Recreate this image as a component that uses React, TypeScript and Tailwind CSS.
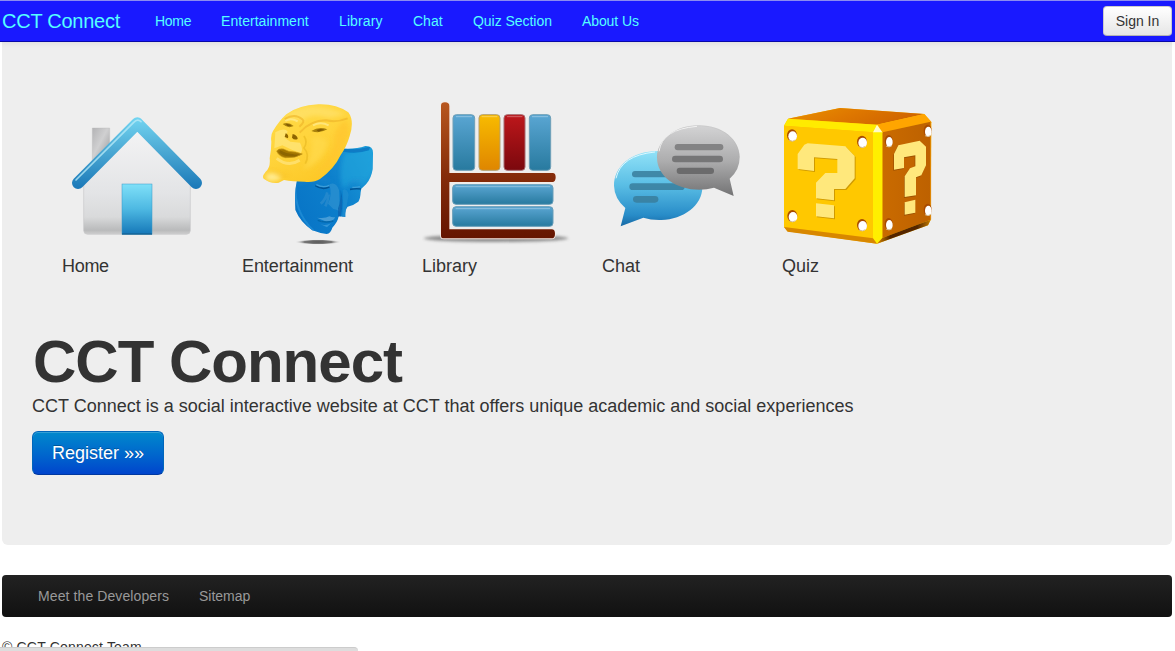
import React from "react";

const BOLTS: [number, number][] = [[52, 122], [262, 141], [53, 364], [262, 391], [342, 139], [459, 108], [342, 388], [459, 345]];

function HomeIcon() {
  return (
    <svg width="150" height="150" viewBox="6 0 450 450" className="block">
      <defs>
        <linearGradient id="roof" x1="0" y1="65" x2="0" y2="282" gradientUnits="userSpaceOnUse">
          <stop offset="0" stopColor="#73d6f2" /><stop offset="0.45" stopColor="#4eabd5" /><stop offset="1" stopColor="#1a78b8" />
        </linearGradient>
        <linearGradient id="wall" x1="0" y1="110" x2="0" y2="418" gradientUnits="userSpaceOnUse">
          <stop offset="0" stopColor="#f3f3f4" /><stop offset="0.6" stopColor="#e3e4e6" /><stop offset="0.83" stopColor="#d9dadb" /><stop offset="0.96" stopColor="#b9babb" /><stop offset="1" stopColor="#cfcfcf" />
        </linearGradient>
        <linearGradient id="door" x1="0" y1="0" x2="0" y2="1">
          <stop offset="0" stopColor="#7fe0f8" /><stop offset="0.5" stopColor="#4db8e2" /><stop offset="1" stopColor="#1577b8" />
        </linearGradient>
        <linearGradient id="chimney" x1="0" y1="0" x2="1" y2="1">
          <stop offset="0" stopColor="#b3b3b5" /><stop offset="0.45" stopColor="#d0d0d1" /><stop offset="1" stopColor="#969698" />
        </linearGradient>
      </defs>
      <path d="M97 99H149V150L97 198Z" fill="url(#chimney)" stroke="#b5b5b5" />
      <path d="M231 98L391 258V406Q391 418 379 418H83Q71 418 71 406V258Z" fill="url(#wall)" stroke="#c8c8ca" strokeWidth="2" />
      <rect x="186" y="267" width="90" height="151" fill="url(#door)" stroke="#3b98c5" strokeWidth="1.5" />
      <path d="M186 417H276" stroke="#155a86" strokeWidth="3" />
      <path d="M54 264L232 85L408 264" fill="none" stroke="url(#roof)" strokeWidth="36" strokeLinecap="round" strokeLinejoin="round" />
      <path d="M48 255L221 82Q232 70 243 80" fill="none" stroke="#b6eaf7" strokeWidth="5" opacity="0.8" strokeLinecap="round" />
    </svg>
  );
}

function MasksIcon() {
  return (
    <svg width="150" height="150" viewBox="6 0 450 450" className="block">
      <defs>
        <linearGradient id="gold" x1="0.2" y1="0" x2="0.7" y2="1">
          <stop offset="0" stopColor="#ffdb46" /><stop offset="0.5" stopColor="#ffd43c" /><stop offset="1" stopColor="#fcc724" />
        </linearGradient>
        <linearGradient id="blueMask" x1="0" y1="0.7" x2="1" y2="0.1">
          <stop offset="0" stopColor="#0874c6" /><stop offset="0.5" stopColor="#0d80cc" /><stop offset="1" stopColor="#1f9fda" />
        </linearGradient>
        <radialGradient id="maskShadow">
          <stop offset="0" stopColor="#555" /><stop offset="0.6" stopColor="#777" /><stop offset="1" stopColor="#ededed" stopOpacity="0" />
        </radialGradient>
        <clipPath id="goldClip"><path d="M99 108Q118 77 139 58Q174 31 235 28Q288 26 325 52Q344 78 329 123Q320 155 302 180Q283 221 240 252Q222 263 194 260Q157 260 132 255L116 263Q92 267 71 251Q65 244 77 230Q92 218 89 190Q94 163 94 140Q91 120 99 108Z" /></clipPath>
        <clipPath id="blueClip"><path d="M300 160Q345 164 376 153Q400 152 399 176L398 222Q394 250 378 268L364 281L362 292Q361 312 355 320Q341 331 323 335Q315 343 316 366L296 364Q294 380 277 398Q272 416 260 417Q236 414 217 406Q181 382 166 345Q163 290 171 255Z" /></clipPath>
        <filter id="soft" x="-40%" y="-40%" width="180%" height="180%"><feGaussianBlur stdDeviation="6" /></filter>
        <filter id="softer" x="-40%" y="-60%" width="180%" height="220%"><feGaussianBlur stdDeviation="2.2" /></filter>
      </defs>
      <ellipse cx="234" cy="441" rx="70" ry="8" fill="url(#maskShadow)" />
      <g clipPath="url(#blueClip)">
        <path d="M150 140H410V430H150Z" fill="url(#blueMask)" />
        <path d="M312 175Q355 170 399 157V225Q386 260 368 272Q356 254 330 264L312 282Q292 250 312 175Z" fill="#24a6dd" opacity="0.6" filter="url(#soft)" />
        <path d="M306 162Q350 166 390 155L387 166Q350 178 310 170Z" fill="#0875c1" opacity="0.8" filter="url(#softer)" />
        <path d="M268 268Q288 258 297 285L300 350Q290 342 280 342L264 326Q278 300 268 268Z" fill="#3294d2" opacity="0.65" filter="url(#softer)" />
        <path d="M302 285Q312 318 302 366H294V340Q303 320 302 285Z" fill="#075fac" opacity="0.65" filter="url(#softer)" />
        <path d="M308 285Q322 278 326 300Q320 325 317 366H306Q312 330 308 285Z" fill="#238fd1" opacity="0.65" filter="url(#softer)" />
        <path d="M262 292Q256 315 242 326M266 298Q264 318 256 334" fill="none" stroke="#338fcf" strokeWidth="8" opacity="0.6" filter="url(#softer)" />
        <path d="M174 270Q205 240 270 257M325 267Q350 248 374 262" fill="none" stroke="#218bd0" strokeWidth="8" opacity="0.5" filter="url(#soft)" />
        <path d="M226 272Q247 286 268 276M330 283Q347 280 363 282" fill="none" stroke="#065597" strokeWidth="5" filter="url(#softer)" />
        <path d="M229 269Q250 280 268 271M337 277Q350 278 360 275" fill="none" stroke="#3d9dd7" strokeWidth="4" filter="url(#softer)" />
        <path d="M231 368Q256 371 268 364Q278 368 286 366Q278 382 261 381Z" fill="#55a6da" opacity="0.8" filter="url(#softer)" />
        <path d="M233 376Q254 385 280 378" fill="none" stroke="#0767ad" strokeWidth="4" filter="url(#softer)" />
        <path d="M240 387Q256 394 273 385L261 397Z" fill="#48a3df" opacity="0.65" filter="url(#softer)" />
        <path d="M166 270Q162 350 220 407" fill="none" stroke="#1a88d3" strokeWidth="6" filter="url(#softer)" />
      </g>
      <g clipPath="url(#goldClip)">
        <path d="M60 20H345V270H60Z" fill="url(#gold)" />
        <path d="M150 49Q224 16 317 57Q289 66 263 69Q213 52 184 79Q150 63 130 78Z" fill="#ffe477" opacity="0.6" filter="url(#soft)" />
        <path d="M318 75Q335 108 317 134Q287 212 217 247Q275 191 283 145Q276 101 318 75Z" fill="#ffc42d" opacity="0.65" filter="url(#soft)" />
        <path d="M215 128Q265 119 262 151Q246 202 189 225Q219 178 215 128Z" fill="#ffda4d" opacity="0.7" filter="url(#soft)" />
        <path d="M106 112Q132 96 143 109L136 130L151 140L180 143Q190 162 183 174Q154 166 127 151L103 160Z" fill="#ffec8c" opacity="0.6" filter="url(#softer)" />
        <path d="M77 239L101 232L125 245Q112 263 80 256Z" fill="#fff0a0" opacity="0.85" filter="url(#soft)" />
        <path d="M134 72Q165 54 187 73Q196 80 178 95M179 113Q211 76 258 76Q291 83 323 70" fill="none" stroke="#efb52a" strokeWidth="6" opacity="0.65" filter="url(#softer)" />
        <path d="M136 78Q153 67 173 79M219 91Q242 78 266 91" fill="none" stroke="#ffef9b" strokeWidth="6" opacity="0.65" filter="url(#softer)" />
        <g filter="url(#softer)">
          <path d="M128 87Q145 79 161 93Q144 102 128 87ZM214 108Q237 93 262 103Q239 117 214 108Z" fill="#a9820c" />
          <path d="M134 126L137 115Q147 119 144 130ZM156 128L158 117Q173 121 173 132Q163 137 156 128Z" fill="#8e6500" />
          <path d="M192 123Q204 141 192 159Q210 179 196 206" fill="none" stroke="#eaba24" strokeWidth="5" opacity="0.7" />
        </g>
        <path d="M137 88Q147 84 154 92L143 94ZM229 105Q241 100 253 104L236 110Z" fill="#755000" opacity="0.75" />
        <path d="M110 168Q115 160 130 162L146 169Q166 170 187 177Q164 191 136 188Q116 184 110 168Z" fill="#a37600" stroke="#c59819" strokeWidth="2" />
        <path d="M120 166Q137 176 158 177Q171 180 180 177L168 184Q136 187 118 173Z" fill="#815c04" opacity="0.65" filter="url(#softer)" />
        <path d="M110 190Q145 218 179 196" fill="none" stroke="#ffe681" strokeWidth="9" opacity="0.7" filter="url(#softer)" />
        <path d="M96 225Q120 246 145 240" fill="none" stroke="#f6bd29" strokeWidth="6" opacity="0.6" filter="url(#soft)" />
      </g>
    </svg>
  );
}

function LibraryIcon() {
  return (
    <svg width="150" height="150" viewBox="21 0 450 450" className="block">
      <defs>
        <linearGradient id="wood" x1="0" y1="22" x2="0" y2="430" gradientUnits="userSpaceOnUse">
          <stop offset="0" stopColor="#b8571e" /><stop offset="0.55" stopColor="#842b0a" /><stop offset="1" stopColor="#651500" />
        </linearGradient>
        <linearGradient id="bookBlue" x1="0" y1="0" x2="0" y2="1"><stop offset="0" stopColor="#5aa6d3" /><stop offset="1" stopColor="#287a9f" /></linearGradient>
        <linearGradient id="bookGold" x1="0" y1="0" x2="0" y2="1"><stop offset="0" stopColor="#f8bb00" /><stop offset="1" stopColor="#df8600" /></linearGradient>
        <linearGradient id="bookRed" x1="0" y1="0" x2="0" y2="1"><stop offset="0" stopColor="#bd171b" /><stop offset="1" stopColor="#7b080d" /></linearGradient>
        <filter id="shelfBlur" x="-20%" y="-100%" width="140%" height="300%"><feGaussianBlur stdDeviation="5" /></filter>
      </defs>
      <ellipse cx="243" cy="430" rx="217" ry="11" fill="#777" opacity="0.8" filter="url(#shelfBlur)" />
      <path d="M78 32Q78 22 90 22Q103 22 103 33V234H413Q422 234 422 247Q422 261 412 261H103V403H410Q420 403 420 416Q420 430 410 430H86Q78 430 78 422Z" fill="url(#wood)" stroke="#f5ebe6" strokeWidth="5" paintOrder="stroke" />
      <g strokeWidth="3">
        <rect x="114" y="59" width="65" height="167" rx="10" fill="url(#bookBlue)" stroke="#6f9fb7" />
        <rect x="192" y="59" width="63" height="167" rx="10" fill="url(#bookGold)" stroke="#b3a170" />
        <rect x="267" y="59" width="63" height="167" rx="10" fill="url(#bookRed)" stroke="#a66b70" />
        <rect x="343" y="59" width="64" height="167" rx="10" fill="url(#bookBlue)" stroke="#6f9fb7" />
        <rect x="113" y="269" width="301" height="59" rx="10" fill="url(#bookBlue)" stroke="#669db9" />
        <rect x="113" y="335" width="301" height="59" rx="10" fill="url(#bookBlue)" stroke="#669db9" />
      </g>
      <path d="M124 65H170M201 65H246M277 65H321M352 65H398M123 275H404M123 341H404" stroke="#fff" strokeWidth="2" opacity="0.5" strokeLinecap="round" />
    </svg>
  );
}

function ChatIcon() {
  return (
    <svg width="150" height="150" viewBox="6 0 450 450" className="block">
      <defs>
        <linearGradient id="blueBubble" x1="0" y1="168" x2="0" y2="394" gradientUnits="userSpaceOnUse">
          <stop offset="0" stopColor="#91e2f8" /><stop offset="0.45" stopColor="#5abee5" /><stop offset="0.85" stopColor="#288cc8" /><stop offset="1" stopColor="#1768a4" />
        </linearGradient>
        <linearGradient id="grayBubble" x1="0" y1="92" x2="0" y2="303" gradientUnits="userSpaceOnUse">
          <stop offset="0" stopColor="#d3d3d4" /><stop offset="0.5" stopColor="#adadae" /><stop offset="1" stopColor="#737374" />
        </linearGradient>
      </defs>
      <path d="M175 168C92 168 42 216 42 272Q43 310 76 339L62 394L130 368Q154 376 184 375C250 374 307 331 307 277C307 215 253 168 175 168Z" fill="url(#blueBubble)" />
      <path d="M48 250Q63 181 165 171" fill="none" stroke="#e7fbff" strokeWidth="3" opacity="0.9" />
      <g fill="#397e9d" opacity="0.85">
        <rect x="96" y="228" width="110" height="19" rx="9" /><rect x="88" y="265" width="166" height="20" rx="10" /><rect x="99" y="303" width="76" height="20" rx="10" />
      </g>
      <path d="M296 91C223 91 171 136 171 188C171 243 228 284 298 284Q320 284 342 278L401 303L389 251Q419 226 419 187C419 134 368 91 296 91Z" fill="url(#grayBubble)" />
      <path d="M177 169Q187 102 291 94" fill="none" stroke="#f6f6f6" strokeWidth="3" />
      <path d="M296 92C223 92 172 136 172 188M296 92C368 92 418 134 418 187" fill="none" stroke="#aaa" strokeWidth="1" opacity="0.6" />
      <g fill="#767677"><rect x="224" y="147" width="146" height="19" rx="9" fill="#838384" /><rect x="216" y="182" width="153" height="20" rx="10" /><rect x="230" y="218" width="112" height="19" rx="9" fill="#6b6b6c" /></g>
    </svg>
  );
}

function QuizIcon() {
  return (
    <svg width="150" height="150" viewBox="21 0 450 450" className="block">
      <defs>
        <linearGradient id="cubeTop" x1="0" y1="0" x2="1" y2="0.3"><stop offset="0" stopColor="#e99200" /><stop offset="0.5" stopColor="#df7800" /><stop offset="1" stopColor="#cf6400" /></linearGradient>
        <linearGradient id="cubeBottom" x1="0" y1="0" x2="1" y2="0"><stop offset="0" stopColor="#d88900" /><stop offset="0.25" stopColor="#542400" /><stop offset="0.75" stopColor="#542600" /><stop offset="1" stopColor="#c37a00" /></linearGradient>
        <linearGradient id="cubeSide" x1="0" y1="0" x2="1" y2="0"><stop offset="0" stopColor="#ca6b00" /><stop offset="1" stopColor="#bd6100" /></linearGradient>
      </defs>
      <path d="M39 71L195 39L448 57L469 82L467 375L459 391L306 446L37 409L27 396V92Z" fill="#ffbd00" />
      <path d="M39 71L195 39L448 57L304 89Z" fill="url(#cubeTop)" />
      <path d="M39 71L306 89L294 112L27 92Z" fill="#ffeb00" />
      <path d="M306 89L448 57L469 80L322 112Z" fill="#ffa500" />
      <path d="M27 92L295 112V429L27 397Z" fill="#ffc800" />
      <path d="M322 112L467 80V374L322 429Z" fill="url(#cubeSide)" />
      <path d="M467 80V374" stroke="#e88a00" strokeWidth="2" />
      <path d="M294 112L306 89L322 112V430L306 446L294 432Z" fill="#ffef00" />
      <path d="M294 112L306 89L322 112Z" fill="#fffac9" />
      <path d="M27 396L294 430L306 446L38 410Z" fill="#d88700" />
      <path d="M306 446L322 429L467 374L459 391Z" fill="url(#cubeBottom)" />
      <path d="M68 177L88 149L98 145L211 154L239 183V250L211 282H177V316L123 310V263L151 234H187V192L117 187V228L68 222ZM123 325L177 331V370L123 364Z" fill="#d09a00" transform="translate(3 3)" />
      <path d="M68 177L88 149L98 145L211 154L239 183V250L211 282H177V316L123 310V263L151 234H187V192L117 187V228L68 222ZM123 325L177 331V370L123 364Z" fill="#ffe87c" />
      <path d="M357 177L370 151L434 137L453 155V211L439 241L423 247V301L389 306V244L405 220L421 214V181L387 187V219L357 224ZM389 322L421 314V353L389 359Z" fill="#9a5000" transform="translate(-2 3)" />
      <path d="M357 177L370 151L434 137L453 155V211L439 241L423 247V301L389 306V244L405 220L421 214V181L387 187V219L357 224ZM389 322L421 314V353L389 359Z" fill="#ffe87c" />
      {BOLTS.map(([x, y], i) => (
        <g key={i}>
          <ellipse cx={x - 1} cy={y - 1} rx={i < 4 ? 15 : 12} ry="18" fill="#a84b00" />
          <ellipse cx={x + 1} cy={y + 2} rx={i < 4 ? 13 : 10} ry="15" fill="#fff" />
          <path d={`M${x - 9} ${y + 14}Q${x} ${y + 20} ${x + 9} ${y + 13}`} fill="none" stroke="#d8c29c" strokeWidth="3" />
        </g>
      ))}
    </svg>
  );
}

const tiles = [
  { label: "Home", Icon: HomeIcon, tracking: "tracking-[-0.3px]" },
  { label: "Entertainment", Icon: MasksIcon, tracking: "tracking-[-0.08px]" },
  { label: "Library", Icon: LibraryIcon, tracking: "tracking-normal" },
  { label: "Chat", Icon: ChatIcon, tracking: "tracking-normal" },
  { label: "Quiz", Icon: QuizIcon, tracking: "tracking-normal" },
];

const links = [
  { label: "Home", width: "w-[66px] tracking-[-0.3px]" },
  { label: "Entertainment", width: "w-[118px] tracking-[0.04px]" },
  { label: "Library", width: "w-[74px] tracking-[0.1px]" },
  { label: "Chat", width: "w-[60px]" },
  { label: "Quiz Section", width: "w-[109px] tracking-[-0.04px]" },
  { label: "About Us", width: "w-[90px] tracking-[-0.1px]" },
];

export default function App() {
  return (
    <div className="relative flex h-[651px] w-full flex-col overflow-hidden bg-white font-['Liberation_Sans',Arial,sans-serif] text-sm leading-5 text-[#333]">
      <header className="relative z-10 flex h-[42px] shrink-0 items-center border-t border-b border-t-[#8c8cf0] border-b-[#0808a8] bg-[#1919ff] pr-[3px] pl-[2px] text-[#55ffff] shadow-[0_1px_6px_rgba(0,0,0,0.08)]">
        <a className="w-[153px] text-xl tracking-[-0.25px]">CCT Connect</a>
        <nav className="flex flex-1">
          {links.map(({ label, width }) => <a key={label} className={`${width} whitespace-nowrap`}>{label}</a>)}
        </nav>
        <button className="h-[30px] w-[69px] rounded border border-[#ccc] border-b-[#b3b3b3] bg-linear-to-b from-white to-[#e6e6e6] text-[#333]">Sign In</button>
      </header>
      <main className="mr-[3px] ml-[2px] flex h-[503px] shrink-0 flex-col rounded-b-md bg-[#eee] px-[30px] text-lg leading-[27px]">
        <div className="flex pt-[53px] pl-[30px]">
          {tiles.map(({ label, Icon, tracking }) => (
            <figure key={label} className="w-[180px]">
              <Icon />
              <figcaption className={`mt-2 ${tracking}`}>{label}</figcaption>
            </figure>
          ))}
        </div>
        <h1 className="mt-[52px] pl-px text-[60px] leading-[60px] font-bold tracking-[-1px]">CCT Connect</h1>
        <p className="mt-px">CCT Connect is a social interactive website at CCT that offers unique academic and social experiences</p>
        <button className="mt-[11px] h-[44px] w-[132px] shrink-0 rounded-md border border-[#0066bb] border-b-[#0038a0] bg-linear-to-b from-[#0088cc] to-[#0044cc] text-lg text-white shadow-[inset_0_1px_0_rgba(255,255,255,0.2)] [text-shadow:0_-1px_0_rgba(0,0,0,0.25)]">Register »»</button>
      </main>
      <nav className="mt-[30px] mr-[3px] ml-[2px] flex h-[42px] shrink-0 items-center rounded bg-linear-to-b from-[#222] to-[#111] pl-9 text-[#999]">
        <a className="w-[161px] tracking-[0.1px]">Meet the Developers</a>
        <a>Sitemap</a>
      </nav>
      <footer className="mt-5 pl-[2px] tracking-[0.18px]">© CCT Connect Team</footer>
      <div className="absolute bottom-0 left-0 h-[4px] w-[358px] rounded-tr border-t border-[#ccc] bg-[#ddd]" />
    </div>
  );
}
